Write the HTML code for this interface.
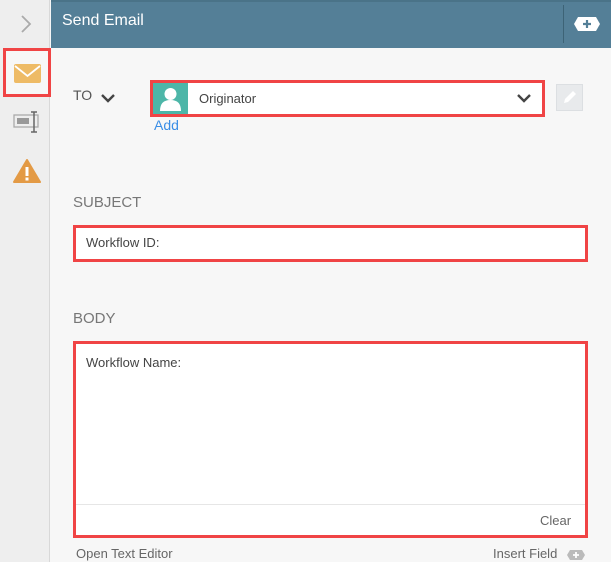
<!DOCTYPE html><html><head><style>
*{margin:0;padding:0;box-sizing:border-box}
body{width:611px;height:562px;background:#f7f7f7;font-family:"Liberation Sans",sans-serif;position:relative;overflow:hidden;color:#555}
.a{position:absolute}
</style></head><body>
<div class="a" style="left:0;top:0;width:50px;height:562px;background:#eeeeee;border-right:1px solid #d8d8d8"></div>
<svg class="a" style="left:19px;top:14px" width="14" height="20"><path d="M3 2 L11 10 L3 18" stroke="#aaa" stroke-width="1.8" fill="none"/></svg>
<div class="a" style="left:3px;top:48px;width:48px;height:49px;border:3px solid #f04445;background:#f7f7f7"></div>
<svg class="a" style="left:14px;top:64px" width="27" height="19"><rect width="27" height="19" rx="2" fill="#eebb66"/><path d="M1 2 L13.5 12 L26 2" stroke="#fff" stroke-width="1.8" fill="none"/></svg>
<svg class="a" style="left:13px;top:110px" width="28" height="24"><rect x="1" y="5" width="24" height="12" fill="none" stroke="#aaa" stroke-width="1.3"/><rect x="4" y="8" width="12" height="6" fill="#999"/><path d="M18 2h6M21 2v20M18 22h6" stroke="#666" stroke-width="1.5"/></svg>
<svg class="a" style="left:13px;top:158px" width="28" height="26"><path d="M14 2 L27 24 L1 24 Z" fill="#e39a45" stroke="#e39a45" stroke-linejoin="round" stroke-width="2"/><rect x="12.5" y="9" width="3" height="9" fill="#fff"/><rect x="12.5" y="19.5" width="3" height="3" fill="#fff"/></svg>
<div class="a" style="left:51px;top:0;width:560px;height:48px;background:#547f97;border-top:2px solid #4a7388"></div>
<div class="a" style="left:62px;top:12px;color:#fff;font-size:16px">Send Email</div>
<div class="a" style="left:563px;top:5px;width:1px;height:38px;background:#3d6376"></div>
<svg class="a" style="left:573px;top:16px" width="28" height="16"><path d="M5 1h18l4 7-4 7H5L1 8z" fill="#fff"/><path d="M14 4v8M10 8h8" stroke="#547f97" stroke-width="2.2"/></svg>
<div class="a" style="left:73px;top:87px;font-size:14px">TO</div>
<svg class="a" style="left:100px;top:92px" width="16" height="12"><path d="M2 3l6 6 6-6" stroke="#444" stroke-width="2.4" fill="none"/></svg>
<div class="a" style="left:150px;top:80px;width:395px;height:37px;border:3px solid #f04445;background:#fff"></div>
<div class="a" style="left:153px;top:83px;width:35px;height:31px;background:#4db6a8"></div>
<svg class="a" style="left:158px;top:85px" width="25" height="27"><circle cx="12.5" cy="9" r="6" fill="#fff"/><path d="M2 26 Q2 15 12.5 15 Q23 15 23 26z" fill="#fff"/></svg>
<div class="a" style="left:199px;top:91px;font-size:13px;color:#444">Originator</div>
<svg class="a" style="left:516px;top:92px" width="16" height="12"><path d="M2 3l6 6 6-6" stroke="#444" stroke-width="2.4" fill="none"/></svg>
<div class="a" style="left:556px;top:84px;width:27px;height:27px;background:#e8eaec;border:1px solid #dcdfe2"></div>
<svg class="a" style="left:561px;top:89px" width="17" height="17"><path d="M3 14 L4 10 L12 2 L15 5 L7 13z" fill="#fff"/></svg>
<div class="a" style="left:154px;top:117px;font-size:14px;color:#3a8ee6">Add</div>
<div class="a" style="left:73px;top:194px;font-size:15px;color:#777">SUBJECT</div>
<div class="a" style="left:73px;top:225px;width:515px;height:37px;border:3px solid #f04445;background:#fff"></div>
<div class="a" style="left:86px;top:235px;font-size:13px;color:#444">Workflow ID:</div>
<div class="a" style="left:73px;top:310px;font-size:15px;color:#777">BODY</div>
<div class="a" style="left:73px;top:341px;width:515px;height:197px;border:3px solid #f04445;background:#fff"></div>
<div class="a" style="left:76px;top:504px;width:509px;height:1px;background:#e6e6e6"></div>
<div class="a" style="left:86px;top:355px;font-size:13px;color:#444">Workflow Name:</div>
<div class="a" style="left:540px;top:513px;font-size:13px;color:#666">Clear</div>
<div class="a" style="left:76px;top:546px;font-size:13px;color:#666">Open Text Editor</div>
<div class="a" style="left:493px;top:546px;font-size:13px;color:#666">Insert Field</div>
<svg class="a" style="left:566px;top:549px" width="20" height="12"><path d="M4 1h12l3 5-3 5H4L1 6z" fill="#bbb"/><path d="M10 3v6M7 6h6" stroke="#fff" stroke-width="1.8"/></svg>
</body></html>
